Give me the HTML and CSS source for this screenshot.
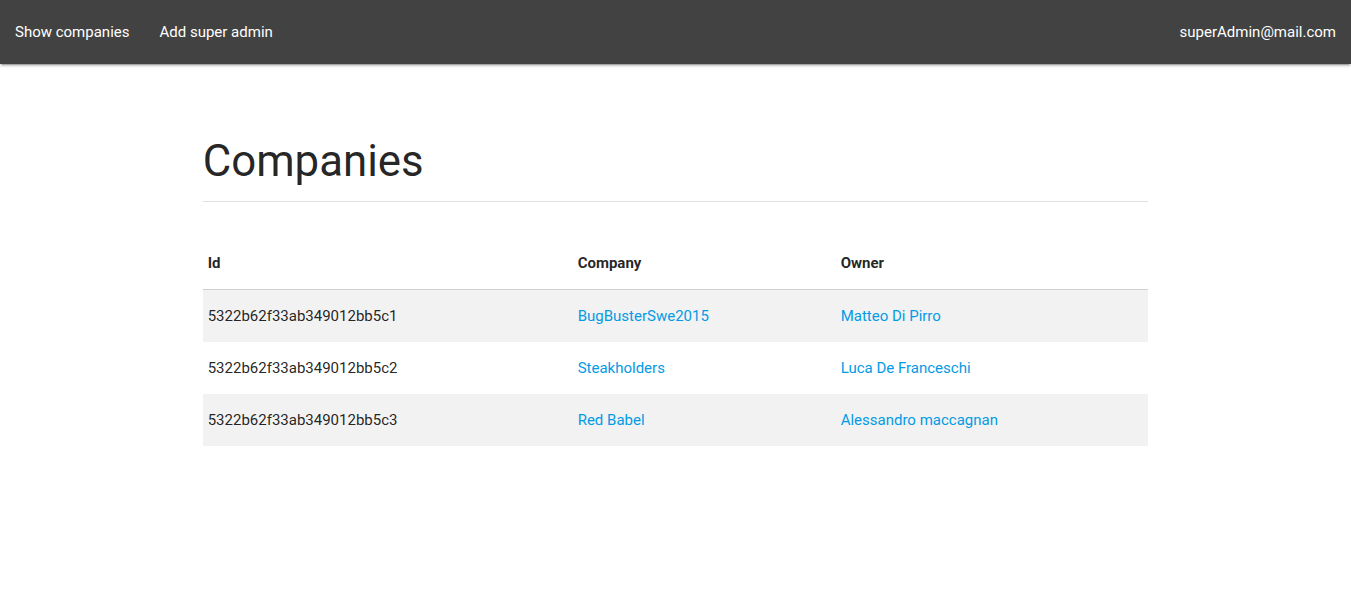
FILE: index.html
```html
<!DOCTYPE html>
<html lang="en">
<head>
<meta charset="utf-8">
<title>Companies</title>
<link rel="stylesheet" href="styles.css">
</head>
<body>
<nav class="navbar">
  <ul class="nav-left">
    <li><a href="#">Show companies</a></li>
    <li><a href="#">Add super admin</a></li>
  </ul>
  <ul class="nav-right">
    <li><a href="#">superAdmin@mail.com</a></li>
  </ul>
</nav>
<main class="container">
  <h1 class="page-title">Companies</h1>
  <hr class="divider">
  <table class="striped">
    <thead>
      <tr><th class="col-id">Id</th><th class="col-company">Company</th><th class="col-owner">Owner</th></tr>
    </thead>
    <tbody>
      <tr><td>5322b62f33ab349012bb5c1</td><td><a href="#">BugBusterSwe2015</a></td><td><a href="#">Matteo Di Pirro</a></td></tr>
      <tr><td>5322b62f33ab349012bb5c2</td><td><a href="#">Steakholders</a></td><td><a href="#">Luca De Franceschi</a></td></tr>
      <tr><td>5322b62f33ab349012bb5c3</td><td><a href="#">Red Babel</a></td><td><a href="#">Alessandro maccagnan</a></td></tr>
    </tbody>
  </table>
</main>
</body>
</html>
```

FILE: styles.css
```css
* { box-sizing: border-box; }
html, body { margin: 0; padding: 0; }
body {
  font-family: Roboto, "Liberation Sans", sans-serif;
  font-size: 15px;
  line-height: 1.5;
  color: rgba(0, 0, 0, 0.87);
  background: #fff;
}
.navbar {
  height: 64px;
  background: #424242;
  display: flex;
  justify-content: space-between;
  align-items: stretch;
  box-shadow: 0 2px 2px 0 rgba(0,0,0,0.14), 0 1px 5px 0 rgba(0,0,0,0.12), 0 3px 1px -2px rgba(0,0,0,0.2);
}
.navbar ul {
  list-style: none;
  margin: 0;
  padding: 0;
  display: flex;
}
.navbar a {
  display: block;
  padding: 0 15px;
  line-height: 64px;
  font-size: 15px;
  color: #fff;
  text-decoration: none;
}
.container {
  width: 70%;
  margin: 0 auto;
  padding-top: 72px;
}
.page-title {
  font-size: 43.8px;
  font-weight: 400;
  line-height: 50px;
  margin: 0 0 15px 0;
}
.divider {
  border: 0;
  border-top: 1px solid #e0e0e0;
  margin: 0 0 35px 0;
}
table {
  width: 100%;
  border-collapse: separate;
  border-spacing: 0;
}
th, td {
  text-align: left;
  padding: 15px 5px;
  line-height: 22px;
  vertical-align: middle;
}
th {
  font-weight: 700;
  border-bottom: 1px solid #d0d0d0;
}
.col-id { width: 370px; }
.col-company { width: 263px; }
tbody tr:nth-child(odd) { background: #f2f2f2; }
td a { color: #039be5; text-decoration: none; }
```
